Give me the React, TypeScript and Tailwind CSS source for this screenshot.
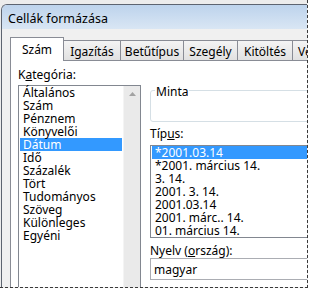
const categories = ['Általános', 'Szám', 'Pénznem', 'Könyvelői', 'Dátum', 'Idő', 'Százalék', 'Tört', 'Tudományos', 'Szöveg', 'Különleges', 'Egyéni'];
const types = ['*2001.03.14', '*2001. március 14.', '3. 14.', '2001. 3. 14.', '2001.03.14', '2001. márc.. 14.', '01. március 14.'];
const tabs = [
  { label: 'Igazítás', w: 'w-[57px]' },
  { label: 'Betűtípus', w: 'w-[63px]' },
  { label: 'Szegély', w: 'w-[54px]' },
  { label: 'Kitöltés', w: 'w-[55px]' },
  { label: 'Védelem', w: 'w-[60px]' },
];

export default function App() {
  return (
    <div className="w-[311px] h-[289px] bg-white overflow-hidden text-[12px] text-black leading-[15px] font-['Noto_Sans',sans-serif]">
      <div className="w-[308px] h-[288px] border-r border-b border-dashed border-[#3a3a3a] overflow-hidden bg-[#ececec]">
        <div className="ml-[1px] mt-[4px] w-[420px] h-[320px] flex flex-col border-l border-t border-[#5d6470] rounded-tl-[6px] overflow-hidden bg-[#f0f0f0]">
          {/* title bar */}
          <div className="h-[24px] shrink-0 pl-[6px] pt-[6px] bg-gradient-to-b from-[#bdd3ec] to-[#d9e6f4] text-[12.5px] whitespace-nowrap">
            Cellák formázása
          </div>
          <div className="flex-1 flex flex-col pl-[8px] pt-[8px]">
            {/* tabs */}
            <div className="flex items-end h-[23px]">
              <div className="relative z-10 w-[54px] h-[24px] -mb-px flex items-center justify-center bg-white border-l border-t border-r border-[#898c95]">
                Szám
              </div>
              {tabs.map((t) => (
                <div
                  key={t.label}
                  className={`${t.w} h-[20px] shrink-0 flex items-center justify-center pt-[2px] whitespace-nowrap overflow-hidden border-t border-r border-[#898c95] bg-gradient-to-b from-[#f4f4f4] to-[#e1e1e1]`}
                >
                  {t.label}
                </div>
              ))}
            </div>
            {/* panel */}
            <div className="flex-1 flex gap-[9px] bg-white border border-[#898c95] pl-[7px] pt-[6px]">
              <div className="w-[123px] shrink-0 flex flex-col">
                <div className="mb-[3px] whitespace-nowrap">
                  K<span className="underline">a</span>tegória:
                </div>
                <div className="h-[220px] flex border border-[#828790] bg-white">
                  <div className="flex-1 px-[1px]">
                    {categories.map((c) => (
                      <div
                        key={c}
                        className={`h-[13px] leading-[13px] pl-[3px] whitespace-nowrap ${c === 'Dátum' ? 'bg-[#3399ff] text-white' : ''}`}
                      >
                        {c}
                      </div>
                    ))}
                  </div>
                  <div className="w-[17px] shrink-0 bg-[#eaeaea] border-l border-[#f4f4f4] flex justify-center pt-[6px]">
                    <svg width="7" height="4" viewBox="0 0 7 4">
                      <path d="M3.5 0 L7 4 L0 4 Z" fill="#a3a3a3" />
                    </svg>
                  </div>
                </div>
              </div>
              <div className="w-[230px] shrink-0 flex flex-col">
                <div className="relative mt-[23px] h-[32px] border border-[#d5dfe5] rounded-[3px]">
                  <span className="absolute -top-[7px] left-[4px] px-[1px] bg-white">Minta</span>
                </div>
                <div className="mt-[4px] mb-[4px] whitespace-nowrap">
                  Típ<span className="underline">u</span>s:
                </div>
                <div className="h-[93px] border border-[#828790] px-[1px] bg-white">
                  {types.map((t, i) => (
                    <div
                      key={t}
                      className={`h-[13px] leading-[13px] pl-[3px] whitespace-nowrap ${i === 0 ? 'bg-[#3399ff] text-white' : ''}`}
                    >
                      {t}
                    </div>
                  ))}
                </div>
                <div className="mt-[5px] whitespace-nowrap">
                  Nyelv (<span className="underline">o</span>rszág):
                </div>
                <div className="h-[22px] border border-[#abadb3] pl-[3px] flex items-center">magyar</div>
              </div>
            </div>
          </div>
        </div>
      </div>
    </div>
  );
}
